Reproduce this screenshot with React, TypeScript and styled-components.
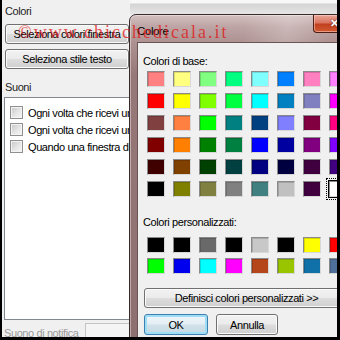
import React from "react";
import styled, { createGlobalStyle } from "styled-components";

const GlobalStyle = createGlobalStyle`
  html, body {
    margin: 0;
    padding: 0;
    background: #000;
  }
  #root {
    width: 340px;
    height: 340px;
  }
  * {
    box-sizing: border-box;
  }
`;

const UI_FONT = `"Liberation Sans", Arial, sans-serif`;

const BASIC_COLORS = [
    "#ff8080", "#ffff80", "#80ff80", "#00ff80", "#80ffff", "#0080ff", "#ff80c0", "#ff80ff",
    "#ff0000", "#ffff00", "#80ff00", "#00ff40", "#00ffff", "#0080c0", "#8080c0", "#ff00ff",
    "#804040", "#ff8040", "#00ff00", "#008080", "#004080", "#8080ff", "#800040", "#ff0080",
    "#800000", "#ff8000", "#008000", "#008040", "#0000ff", "#0000a0", "#800080", "#8000ff",
    "#400000", "#804000", "#004000", "#004040", "#000080", "#000040", "#400040", "#400080",
    "#000000", "#808000", "#808040", "#808080", "#408080", "#c0c0c0", "#400040", "#ffffff",
];

const CUSTOM_COLORS = [
    "#000000", "#000000", "#696969", "#000000", "#c8c8c8", "#000000", "#ffff00", "#ff0000",
    "#00ff00", "#0000ee", "#00ffff", "#ff00ff", "#b5451b", "#99c400", "#1070a8", "#50709c",
];

const SOUND_OPTIONS = [
    "Ogni volta che ricevi un nuovo messaggio",
    "Ogni volta che ricevi una nuova richiesta",
    "Quando una finestra di dialogo si apre",
];

const App: React.FC = () => {
    return (
        <>
            <GlobalStyle />
            <Frame>
                <LeftPanel>
                    <Heading>Colori</Heading>
                    <ButtonStack>
                        <PanelButton>Seleziona colori finestra</PanelButton>
                        <PanelButton>Seleziona stile testo</PanelButton>
                    </ButtonStack>
                    <Heading $top={11}>Suoni</Heading>
                    <ListBox>
                        {SOUND_OPTIONS.map((text) => (
                            <CheckRow key={text}>
                                <CheckBox />
                                <span>{text}</span>
                            </CheckRow>
                        ))}
                    </ListBox>
                    <FieldRow>
                        <FieldLabel>Suono di notifica</FieldLabel>
                        <TextBox />
                    </FieldRow>
                </LeftPanel>

                <Dialog>
                    <TitleBar>
                        <Title>Colore</Title>
                        <CloseButton>✕</CloseButton>
                    </TitleBar>
                    <Client>
                        <Label>Colori di base:</Label>
                        <SwatchGrid $rowGap={6}>
                            {BASIC_COLORS.map((c, i) => (
                                <Swatch key={i} $c={c} $selected={i === BASIC_COLORS.length - 1} />
                            ))}
                        </SwatchGrid>
                        <Label $top={18}>Colori personalizzati:</Label>
                        <SwatchGrid $rowGap={5} $top={7}>
                            {CUSTOM_COLORS.map((c, i) => (
                                <Swatch key={i} $c={c} />
                            ))}
                        </SwatchGrid>
                        <DialogButton $width={205} $top={14}>Definisci colori personalizzati &gt;&gt;</DialogButton>
                        <ButtonRow>
                            <DialogButton $width={64} $focused>OK</DialogButton>
                            <DialogButton $width={62}>Annulla</DialogButton>
                        </ButtonRow>
                    </Client>
                </Dialog>

                <Watermark>©www.chicchedicala.it</Watermark>
            </Frame>
        </>
    );
};

const Frame = styled.div`
    position: relative;
    width: 340px;
    height: 340px;
    overflow: hidden;
    border-style: solid;
    border-color: #000;
    border-width: 0 3px 3px 2px;
    background:
        linear-gradient(180deg, #f8f8f8 0, #f8f8f8 3px, #d4d4d4 4px, #e4e4e4 13px) 128px 0 / 210px 14px no-repeat,
        #f0f0f0;
    font-family: ${UI_FONT};
    font-size: 11px;
    letter-spacing: -0.4px;
    color: #000;
`;

const LeftPanel = styled.div`
    display: flex;
    flex-direction: column;
    width: 230px;
    padding: 4px 0 0 3px;
`;

const Heading = styled.div<{ $top?: number }>`
    margin-top: ${(p) => p.$top ?? 0}px;
    line-height: 15px;
    color: #1e1e1e;
`;

const ButtonStack = styled.div`
    display: flex;
    flex-direction: column;
    gap: 5px;
    margin-top: 5px;
`;

const PanelButton = styled.div`
    display: flex;
    align-items: center;
    justify-content: center;
    width: 124px;
    height: 20px;
    border: 1px solid #707070;
    border-radius: 3px;
    background: linear-gradient(180deg, #f2f2f2 0%, #ebebeb 48%, #dddddd 52%, #cfcfcf 100%);
    box-shadow: inset 0 0 0 1px #fbfbfb;
    white-space: nowrap;
`;

const ListBox = styled.div`
    display: flex;
    flex-direction: column;
    gap: 4px;
    margin: 2px 0 0 -1px;
    width: 240px;
    height: 223px;
    padding: 8px 0 0 5px;
    border: 1px solid #828790;
    background: #ffffff;
    overflow: hidden;
`;

const CheckRow = styled.div`
    display: flex;
    align-items: center;
    gap: 5px;
    height: 13px;
    white-space: nowrap;
`;

const CheckBox = styled.span`
    flex: none;
    width: 13px;
    height: 13px;
    border: 1px solid #8f8f8f;
    background: linear-gradient(135deg, #c6c6c6 0%, #e6e6e6 55%, #f7f7f7 100%);
    box-shadow: inset 0 0 0 1px #f4f4f4;
`;

const FieldRow = styled.div`
    display: flex;
    align-items: flex-start;
    margin: 4px 0 0 -1px;
`;

const FieldLabel = styled.div`
    width: 82px;
    line-height: 15px;
    padding-top: 2px;
    color: #9a9a9a;
    white-space: nowrap;
`;

const TextBox = styled.div`
    width: 150px;
    height: 22px;
    margin-top: -1px;
    border: 1px solid #c4c4c4;
    background: #f4f4f4;
`;

const Dialog = styled.div`
    position: absolute;
    left: 127px;
    top: 14px;
    display: flex;
    flex-direction: column;
    width: 233px;
    height: 340px;
    padding: 0 7px;
    border: 1px solid #3a2b2b;
    border-radius: 7px 7px 0 0;
    background:
        linear-gradient(100deg, rgba(255, 255, 255, 0) 40%, rgba(255, 255, 255, 0.22) 55%, rgba(255, 255, 255, 0) 70%),
        linear-gradient(180deg, #d3c0c0 0px, #bda4a4 12px, #ad9191 28px, #977878 60px, #8d6f6f 100%);
    box-shadow: inset 0 0 0 1px rgba(255, 255, 255, 0.4);
`;

const TitleBar = styled.div`
    display: flex;
    align-items: flex-start;
    height: 27px;
    flex: none;
`;

const Title = styled.div`
    margin-top: 9px;
    line-height: 15px;
    font-size: 11.5px;
    color: #000;
`;

const CloseButton = styled.div`
    display: flex;
    align-items: center;
    justify-content: center;
    width: 43px;
    height: 18px;
    margin: 0 -2px 0 auto;
    border: 1px solid #4e1c12;
    border-top: none;
    border-radius: 0 0 4px 4px;
    background: linear-gradient(180deg, #eba899 0%, #d9745f 45%, #c2401f 55%, #d25a33 100%);
    box-shadow: inset 0 0 0 1px rgba(255, 220, 210, 0.5);
    color: #ffffff;
    font-size: 11px;
    font-weight: 700;
    text-shadow: 0 0 2px #5a1a0a;
`;

const Client = styled.div`
    flex: 1;
    display: flex;
    flex-direction: column;
    align-items: flex-start;
    padding: 11px 0 0 5px;
    border: 1px solid #6b5454;
    border-bottom: none;
    background: #f0f0f0;
`;

const Label = styled.div<{ $top?: number }>`
    margin-top: ${(p) => p.$top ?? 0}px;
    line-height: 15px;
    white-space: nowrap;
`;

const SwatchGrid = styled.div<{ $rowGap: number; $top?: number }>`
    display: grid;
    grid-template-columns: repeat(8, 18px);
    grid-auto-rows: 16px;
    column-gap: 8px;
    row-gap: ${(p) => p.$rowGap}px;
    margin: ${(p) => p.$top ?? 2}px 0 0 4px;
`;

const Swatch = styled.span<{ $c: string; $selected?: boolean }>`
    display: block;
    border: 1px solid;
    border-color: #8a8a8a #d8d8d8 #d8d8d8 #8a8a8a;
    background: ${(p) => p.$c};
    box-shadow: ${(p) => (p.$selected ? "0 0 0 1px #000" : "inset 1px 1px 0 rgba(0, 0, 0, 0.15)")};
    outline: ${(p) => (p.$selected ? "1px dotted #000" : "none")};
    outline-offset: 2px;
`;

const DialogButton = styled.div<{ $width: number; $top?: number; $focused?: boolean }>`
    display: flex;
    align-items: center;
    justify-content: center;
    flex: none;
    width: ${(p) => p.$width}px;
    height: ${(p) => (p.$top !== undefined ? 20 : 21)}px;
    margin: ${(p) => p.$top ?? 0}px 0 0 ${(p) => (p.$top !== undefined ? 1 : 0)}px;
    border: 1px solid ${(p) => (p.$focused ? "#3c7fb1" : "#707070")};
    border-radius: 3px;
    background: ${(p) =>
        p.$focused
            ? "linear-gradient(180deg, #eef6fa 0%, #e3eef4 48%, #d2e2ea 52%, #c4d8e2 100%)"
            : "linear-gradient(180deg, #f2f2f2 0%, #ebebeb 48%, #dddddd 52%, #cfcfcf 100%)"};
    box-shadow: ${(p) => (p.$focused ? "inset 0 0 0 2px #9fdcf5" : "inset 0 0 0 1px #fbfbfb")};
    white-space: nowrap;
`;

const ButtonRow = styled.div`
    display: flex;
    gap: 8px;
    margin: 6px 0 0 1px;
`;

const Watermark = styled.div`
    position: absolute;
    left: 16px;
    top: 23px;
    z-index: 5;
    font-family: "Liberation Serif", "Times New Roman", serif;
    font-size: 18px;
    line-height: 18px;
    letter-spacing: 2px;
    color: rgba(225, 20, 20, 0.75);
    white-space: nowrap;
    pointer-events: none;
`;

export default App;
